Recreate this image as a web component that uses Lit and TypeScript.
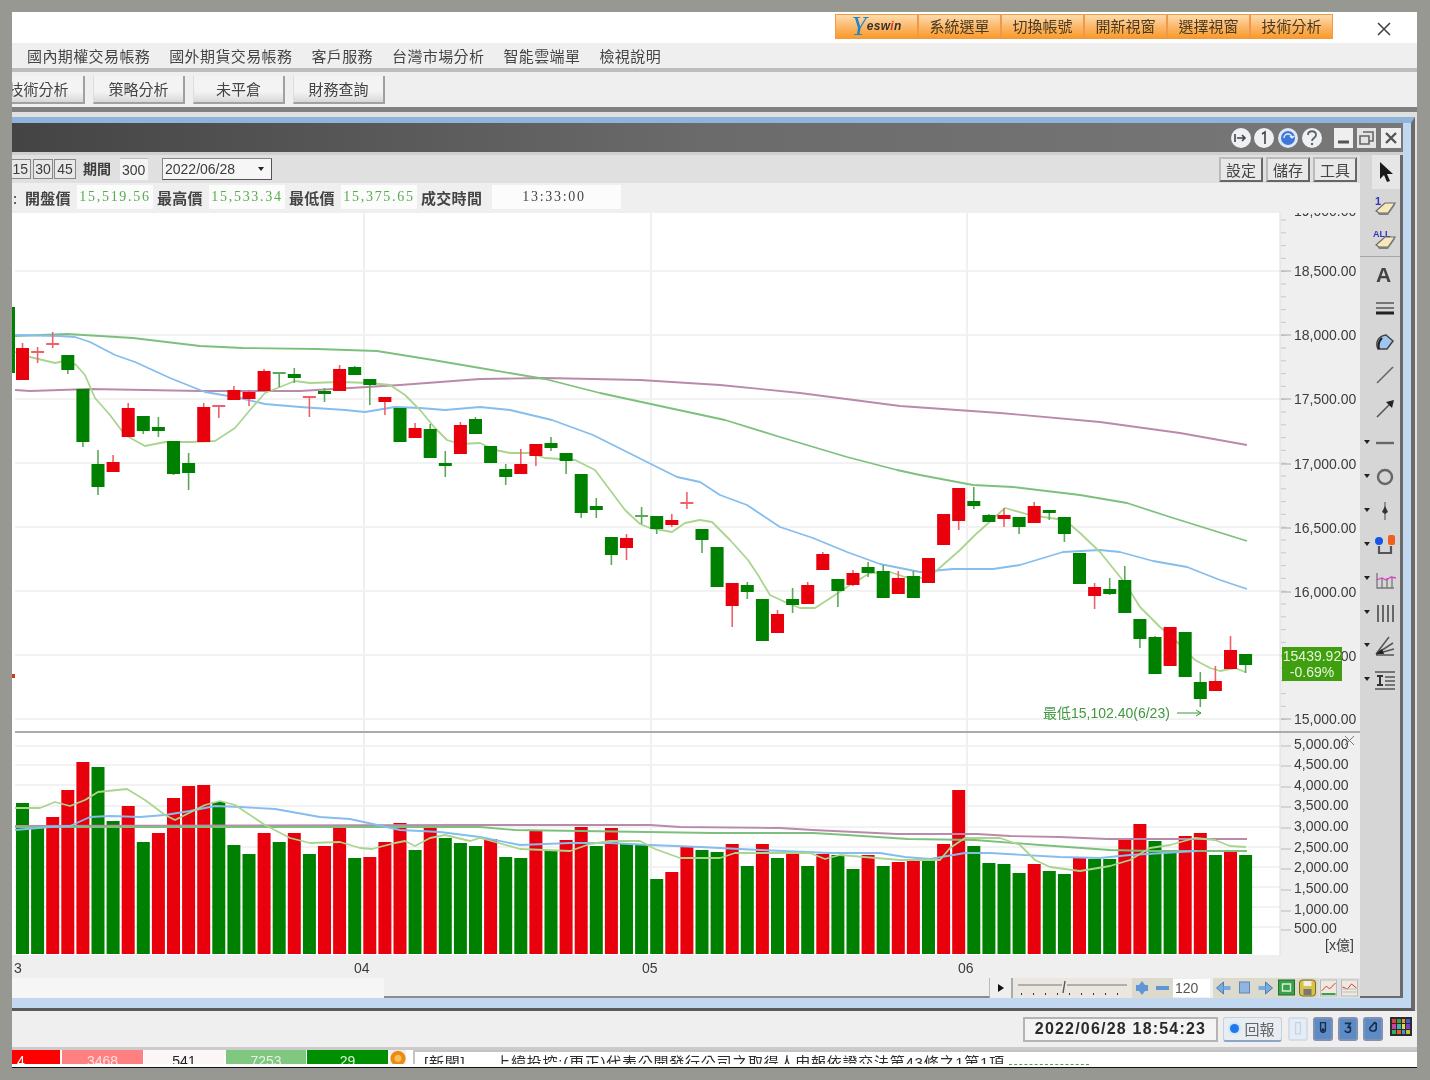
import { LitElement, html, svg, css } from 'lit';
import { customElement } from 'lit/decorators.js';

type Candle = [number, number, number, number, 'r' | 'g'];

// top, bottom, wick high, wick low, colour - in page pixels
const CANDLES: Candle[] = [
  [348,380,343,380,'r'],[351,353,347,363,'r'],[343,345,332,348,'r'],[355,370,355,374,'g'],[389,442,389,447,'g'],
  [464,487,450,495,'g'],[462,472,455,472,'r'],[408,437,403,437,'r'],[416,431,416,434,'g'],[427,431,417,437,'g'],
  [441,474,441,475,'g'],[463,473,453,490,'g'],[407,442,403,442,'r'],[405,407,405,418,'r'],[390,400,386,400,'r'],
  [392,399,390,406,'r'],[371,391,369,391,'r'],[372,374,372,387,'g'],[374,378,368,383,'g'],[396,398,396,417,'r'],
  [391,394,388,402,'g'],[369,391,365,391,'r'],[367,375,366,375,'g'],[379,385,379,405,'g'],[397,402,397,415,'r'],
  [408,442,408,442,'g'],[428,438,423,438,'r'],[429,458,424,458,'g'],[463,466,451,477,'g'],[425,454,422,454,'r'],
  [419,434,417,434,'g'],[446,463,446,463,'g'],[469,477,464,485,'g'],[464,474,449,474,'r'],[444,456,444,466,'r'],
  [443,448,437,451,'g'],[453,461,453,474,'g'],[474,513,474,518,'g'],[506,510,498,518,'g'],[537,555,537,565,'g'],
  [538,548,534,560,'r'],[515,517,507,524,'g'],[516,529,516,534,'g'],[520,525,514,527,'r'],[502,504,492,509,'r'],
  [529,540,529,553,'g'],[547,587,547,587,'g'],[583,606,583,627,'r'],[585,592,582,599,'g'],[599,641,599,641,'g'],
  [614,633,610,633,'r'],[599,605,588,613,'g'],[585,604,582,604,'r'],[554,570,552,570,'r'],[579,591,579,607,'g'],
  [573,585,570,586,'r'],[567,573,562,577,'g'],[571,598,565,598,'g'],[578,594,571,594,'r'],[576,598,571,598,'g'],
  [558,583,558,583,'r'],[514,545,514,545,'r'],[488,521,488,530,'r'],[501,506,487,509,'g'],[515,522,514,522,'g'],
  [515,519,508,527,'r'],[517,527,517,534,'g'],[506,523,502,523,'r'],[510,513,510,520,'g'],[517,534,517,542,'g'],
  [553,584,553,584,'g'],[587,596,583,609,'r'],[589,594,578,595,'g'],[580,613,566,613,'g'],[619,639,619,648,'g'],
  [637,674,636,674,'g'],[627,666,627,666,'r'],[632,677,632,677,'g'],[682,699,672,707,'g'],[681,691,666,691,'r'],
  [650,669,636,669,'r'],[654,665,654,673,'g'],
];

// bar top and colour, bars all stand on y=954
const VOLS: [number, 'r' | 'g'][] = [
  [803,'g'],[828,'g'],[817,'r'],[790,'r'],[762,'r'],[767,'g'],[821,'g'],[806,'r'],[842,'g'],[833,'r'],
  [798,'r'],[786,'r'],[785,'r'],[802,'g'],[845,'g'],[854,'g'],[833,'r'],[842,'g'],[833,'r'],[854,'g'],
  [846,'r'],[827,'r'],[858,'g'],[857,'r'],[842,'r'],[823,'r'],[850,'g'],[827,'r'],[838,'g'],[843,'g'],
  [846,'g'],[839,'r'],[857,'g'],[858,'g'],[830,'r'],[850,'g'],[840,'r'],[827,'r'],[846,'g'],[828,'r'],
  [844,'g'],[844,'g'],[879,'g'],[872,'r'],[847,'r'],[850,'g'],[852,'g'],[844,'r'],[866,'g'],[844,'r'],
  [858,'g'],[852,'r'],[866,'g'],[854,'r'],[855,'g'],[869,'g'],[855,'r'],[866,'g'],[862,'r'],[859,'r'],
  [861,'g'],[844,'r'],[790,'r'],[846,'g'],[863,'g'],[864,'g'],[873,'g'],[864,'r'],[871,'g'],[874,'g'],
  [857,'r'],[859,'g'],[859,'g'],[839,'r'],[824,'r'],[841,'g'],[853,'g'],[836,'r'],[833,'r'],[855,'g'],
  [852,'r'],[855,'g'],
];

const MA_LINES: [string, string][] = [
  ['#b98aa9', '15,390 30,391 90,389 200,391 300,391 400,385 480,379 545,378 640,380 720,385 800,393 900,406 1000,413 1100,422 1180,433 1247,445'],
  ['#7dc07d', '15,336 67,334 133,338 200,346 243,348 317,349 377,351 433,360 480,368 545,379 600,393 660,406 725,420 780,437 847,457 897,470 920,475 973,485 1013,487 1080,495 1127,503 1170,517 1247,541'],
  ['#84bdee', '15,335 60,336 75,337 90,342 115,355 135,362 170,378 205,392 240,398 265,404 300,407 345,410 365,412 395,407 420,408 445,410 480,407 510,410 552,420 593,435 633,455 677,477 700,482 720,495 747,505 780,527 813,538 847,552 880,564 920,572 953,569 993,569 1020,565 1063,552 1100,550 1120,552 1153,561 1187,567 1220,580 1247,589'],
  ['#aad58f', '15,352 30,357 55,363 68,360 76,365 85,375 95,398 110,415 125,435 145,446 165,442 190,442 215,441 235,428 250,410 265,393 280,387 295,381 310,383 340,382 370,383 390,385 405,395 420,410 435,428 447,440 460,444 480,443 495,450 510,453 530,453 545,458 560,459 575,460 595,470 610,490 625,510 640,524 650,528 672,532 685,523 700,520 712,522 730,540 748,560 758,575 770,595 785,602 800,608 815,608 832,597 850,585 870,573 890,572 905,577 925,578 935,572 960,550 975,535 1005,508 1030,515 1050,518 1065,520 1080,533 1100,552 1125,583 1140,607 1160,627 1175,640 1195,660 1210,668 1220,671 1235,668 1245,672'],
];

const VOL_LINES: [string, string][] = [
  ['#b98aa9', '15,826 480,825 650,825 680,827 780,828 813,830 897,834 977,834 1010,836 1060,837 1107,839 1247,839'],
  ['#7dc07d', '15,827 480,827 515,830 713,833 813,833 847,835 908,839 975,840 1040,845 1110,850 1150,851 1247,851'],
  ['#84bdee', '15,830 50,827 70,826 90,817 110,816 140,817 165,815 190,811 215,806 240,807 275,809 320,817 350,819 400,830 440,832 480,837 520,845 570,843 610,843 650,845 700,847 760,850 830,853 880,853 905,857 930,859 965,853 990,853 1060,857 1100,858 1130,855 1197,851'],
  ['#aad58f', '15,808 40,808 55,802 70,806 85,800 98,792 127,789 145,800 165,815 175,820 205,805 220,801 235,805 265,825 290,838 310,843 340,842 360,848 372,849 395,843 405,841 415,846 430,838 445,835 470,841 480,838 495,842 520,849 545,850 570,851 590,844 610,841 640,841 655,849 680,858 720,858 735,853 810,853 825,859 840,855 900,860 940,860 950,848 965,838 1000,838 1020,845 1035,860 1050,867 1080,871 1110,866 1130,860 1150,848 1170,845 1195,838 1215,840 1230,846 1246,847'],
];

const PRICE_LABELS: [string, number][] = [
  ['18,500.00',271],['18,000.00',335],['17,500.00',399],['17,000.00',464],['16,500.00',528],['16,000.00',592],['15,500.00',656],['15,000.00',719],
];
const VOL_LABELS: [string, number][] = [
  ['5,000.00',744],['4,500.00',764],['4,000.00',785],['3,500.00',805],['3,000.00',826],['2,500.00',847],['2,000.00',867],['1,500.00',888],['1,000.00',909],['500.00',928],
];

const px = (i: number) => 22.5 + 15.1 * i;
const red = '#e8000c';
const grn = '#008000';
const redWick = '#f0606a';
const grnWick = '#5aa85a';

@customElement('kline-chart')
export class KlineChart extends LitElement {
  static styles = css`
    :host { display: block; }
    svg { display: block; }
    text { font-family: "Liberation Sans", Arial, sans-serif; font-size: 14px; fill: #3c3c3c; }
    .low { fill: #3f983f; }
    .cjk { font-family: "Liberation Sans", "Noto Sans CJK TC", sans-serif; }
    .badge { fill: #e6f5dd; }
  `;

  render() {
    const priceTicks: number[] = [];
    for (let y = 220; y < 730; y += 12.8) priceTicks.push(y);
    return html`
      <svg width="1348" height="765" viewBox="12 213 1348 765">
        <rect x="12" y="213" width="1348" height="765" fill="#fff"/>
        <rect x="1280" y="213" width="80" height="742" fill="#efefef"/>
        <rect x="12" y="955" width="1348" height="23" fill="#efefef"/>
        <rect x="12" y="307" width="3" height="66" fill="#008000"/>
        <rect x="12" y="674" width="3" height="4" fill="#d23a1a"/>

        ${[271,335,399,463,527,591,655,719].map(y => svg`<line x1="15" x2="1280" y1=${y} y2=${y} stroke="#f2f2f2" stroke-width="2"/>`)}
        ${[746,765,785,806,827,847,867,887,907,927].map(y => svg`<line x1="15" x2="1280" y1=${y} y2=${y} stroke="#f2f2f2" stroke-width="2"/>`)}
        ${[364,651,967].map(x => svg`<line x1=${x} x2=${x} y1="213" y2="954" stroke="#f0f0f0" stroke-width="2"/>`)}
        <line x1="1280" x2="1280" y1="213" y2="955" stroke="#dddddd"/>

        ${priceTicks.map(y => svg`<line x1="1281" x2="1286" y1=${y} y2=${y} stroke="#c8c8c8"/>`)}
        ${PRICE_LABELS.map(([, y]) => svg`<line x1="1281" x2="1291" y1=${y} y2=${y} stroke="#aaaaaa"/>`)}
        ${VOL_LABELS.map(([, y]) => svg`<line x1="1281" x2="1291" y1=${y + 2} y2=${y + 2} stroke="#bbbbbb"/>`)}
        <text x="1294" y="216">19,000.00</text>
        ${PRICE_LABELS.map(([t, y]) => svg`<text x="1294" y=${y + 5}>${t}</text>`)}
        ${VOL_LABELS.map(([t, y]) => svg`<text x="1294" y=${y + 5}>${t}</text>`)}
        <text x="1325" y="950" class="cjk">[x億]</text>
        <path d="M1345 736l9 9M1354 736l-9 9" stroke="#777" fill="none"/>

        ${MA_LINES.map(([c, p]) => svg`<polyline points=${p} fill="none" stroke=${c} stroke-width="1.8" stroke-linejoin="round"/>`)}

        ${CANDLES.map(([t, b, h, l, c], i) => svg`
          <line x1=${px(i)} x2=${px(i)} y1=${h} y2=${l} stroke=${c === 'r' ? redWick : grnWick} stroke-width="1.6"/>
          <rect x=${px(i) - 6.5} y=${t} width="13" height=${b - t}
            fill=${b - t <= 2 ? (c === 'r' ? redWick : grnWick) : (c === 'r' ? red : grn)}/>
        `)}

        <line x1="15" x2="1360" y1="732" y2="732" stroke="#ababab" stroke-width="2"/>

        ${VOLS.map(([t, c], i) => svg`<rect x=${px(i) - 6.5} y=${t} width="13" height=${954 - t} fill=${c === 'r' ? red : grn}/>`)}
        ${VOL_LINES.map(([c, p]) => svg`<polyline points=${p} fill="none" stroke=${c} stroke-width="1.8" stroke-linejoin="round"/>`)}

        <text x="1043" y="718" class="low cjk">最低15,102.40(6/23)</text>
        <path d="M1177 713h24m-5-3l5 3-5 3" stroke="#3f983f" fill="none"/>

        <rect x="1282" y="647" width="60" height="34" fill="#3f9f0f"/>
        <text x="1312" y="661" text-anchor="middle" class="badge">15439.92</text>
        <text x="1312" y="677" text-anchor="middle" class="badge">-0.69%</text>

        <text x="14" y="973">3</text>
        <text x="354" y="973">04</text>
        <text x="642" y="973">05</text>
        <text x="958" y="973">06</text>
      </svg>
    `;
  }
}

const eraser = svg`<path d="M3 17l9-8h10l-7 10H6z" fill="#f7e8ba" stroke="#6a6a6a" stroke-width="1.2"/><path d="M4 18l2 3h9l7-10v-2l-7 10H6z" fill="#7f7f7f"/>`;

const TOOLS = [
  svg`<path d="M7 2v17l4-4 3 7 3-1-3-7h6z" fill="#1a1a1a"/>`,
  svg`<text x="2" y="11" font-size="11" font-weight="700" fill="#3333bb" font-family="Liberation Sans">1</text>${eraser}`,
  svg`<text x="0" y="9" font-size="9" font-weight="700" fill="#3333bb" font-family="Liberation Sans">ALL</text>${eraser}`,
  svg`<text x="3" y="20" font-size="21" font-weight="700" fill="#444" font-family="Liberation Sans">A</text>`,
  svg`<path d="M3 7h18M3 12h18" stroke="#555" stroke-width="1.5"/><path d="M3 17h18" stroke="#222" stroke-width="3"/>`,
  svg`<path d="M5 20c-3-6 0-13 8-14l7 6-6 8z" fill="#9fc6ee" stroke="#444" stroke-width="1.5"/><path d="M6 20c-1-4 0-8 3-11" stroke="#222" stroke-width="2" fill="none"/>`,
  svg`<path d="M4 20L20 4" stroke="#666" stroke-width="1.6"/>`,
  svg`<path d="M4 20L17 7" stroke="#555" stroke-width="1.6"/><path d="M21 3l-8 2 6 6z" fill="#222"/>`,
  svg`<path d="M3 12h18" stroke="#666" stroke-width="2.4"/>`,
  svg`<circle cx="12" cy="12" r="7" fill="none" stroke="#666" stroke-width="2.4"/>`,
  svg`<path d="M12 3v18" stroke="#777" stroke-width="1.5"/><path d="M12 7l3 6-3 2-3-2z" fill="#333"/>`,
  svg`<circle cx="6" cy="8" r="4" fill="#1656e6"/><rect x="15" y="2" width="7" height="10" rx="2" fill="#f0601a"/><path d="M6 13v7h12v-7" stroke="#555" stroke-width="2.2" fill="none"/>`,
  svg`<path d="M4 6v15h17M9 11v10M14 11v10M19 11v10" stroke="#777" stroke-width="1.3" fill="none"/><path d="M3 13l6-2 4 2 5-3 5 1" stroke="#e040d0" stroke-width="1.3" fill="none"/>`,
  svg`<path d="M5 4v17M10 4v17M15 4v17M20 4v17" stroke="#666" stroke-width="2"/>`,
  svg`<path d="M3 20L16 3M3 20L20 9M3 20L21 15M3 21h18" stroke="#555" stroke-width="1.5"/><path d="M3 20l6-5 2 5z" fill="#222"/>`,
  svg`<path d="M2 4h20M2 21h20M12 9h10M12 13h10M12 17h10" stroke="#555" stroke-width="1.5"/><path d="M4 8h6M7 8v9M4 17h6" stroke="#333" stroke-width="2"/>`,
];

const CTRL = [
  svg`<path d="M3 10l7-6v12z" fill="#79abe0" stroke="#4f7cb0"/><rect x="10" y="8" width="7" height="4" fill="#79abe0"/>`,
  svg`<rect x="5" y="4" width="10" height="11" fill="#8fb6e2" stroke="#5f86b4"/>`,
  svg`<path d="M17 10l-7-6v12z" fill="#79abe0" stroke="#4f7cb0"/><rect x="3" y="8" width="7" height="4" fill="#79abe0"/>`,
  svg`<rect x="2" y="2" width="16" height="15" fill="#3aa04a" stroke="#1d7030"/><path d="M6 6h8v7H6z" fill="none" stroke="#d6f0d6" stroke-width="1.4"/>`,
  svg`<rect x="2" y="2" width="16" height="16" rx="3" fill="#d9c24a" stroke="#7d6d20"/><rect x="6" y="3" width="8" height="5" fill="#eee"/><rect x="6" y="11" width="8" height="6" fill="#777"/>`,
  svg`<rect x="2" y="2" width="16" height="16" fill="#ece9df" stroke="#bbb"/><path d="M3 13l5-5 3 3 6-6" stroke="#d83a3a" fill="none"/><path d="M3 16h14" stroke="#3aa04a" stroke-width="2"/>`,
  svg`<rect x="2" y="2" width="16" height="16" fill="#ece9df" stroke="#bbb"/><path d="M3 9l5 2 4-5 5 4" stroke="#d83a3a" fill="none"/><path d="M3 14h14M3 11h14" stroke="#bbb"/>`,
];

const STATUS_ICONS = [
  svg`<path d="M7 4h6v9a3 3 0 0 1-6 0z" fill="none" stroke="#1f2c45" stroke-width="1.8"/><circle cx="10" cy="13" r="2" fill="#1f2c45"/>`,
  svg`<path d="M6 5h7l-3 5h3v4c0 3-6 3-7 0" fill="none" stroke="#1f2c45" stroke-width="2"/>`,
  svg`<path d="M12 4L6 11c-1 4 7 5 8 1V5z" fill="none" stroke="#1f2c45" stroke-width="2"/>`,
];

@customElement('tool-rail')
export class ToolRail extends LitElement {
  static styles = css`
    :host { display: block; width: 43px; height: 843px; box-sizing: border-box; background: #d6d6d6; border-right: 3px solid #6a6a6a; border-bottom: 2px solid #6a6a6a; }
    .item { position: relative; height: 33.9px; display: flex; align-items: center; justify-content: flex-end; padding-right: 3px; box-sizing: border-box; }
    .sel { background: linear-gradient(90deg, transparent 12px, #e6e6e6 12px); }
    .sep { box-shadow: inset 0 -1px #a8a8a8; }
    .more::before { content: ""; position: absolute; left: 4px; top: 14px; border: 3px solid transparent; border-top: 4px solid #222; border-bottom: 0; }
    svg { width: 24px; height: 24px; }
  `;

  render() {
    return TOOLS.map((t, i) => html`
      <div class="item ${i === 0 ? 'sel' : ''} ${i === 2 ? 'sep' : ''} ${i >= 8 ? 'more' : ''}">
        <svg viewBox="0 0 24 24">${t}</svg>
      </div>
    `);
  }
}

@customElement('app-root')
export class AppRoot extends LitElement {
  static styles = css`
    :host { display: block; width: 1430px; height: 1080px; box-sizing: border-box; padding: 12px 13px 0 12px; background: #979891; overflow: hidden; font-family: "Noto Sans CJK TC", "Liberation Sans", sans-serif; }
    .win { width: 1405px; height: 1056px; display: flex; flex-direction: column; background: #fff; border-bottom: 1px solid #111; box-sizing: border-box; overflow: hidden; filter: blur(0.75px); }

    .top { height: 31px; flex: none; display: flex; align-items: flex-start; justify-content: flex-end; padding-top: 2px; box-sizing: border-box; }
    .obtn { width: 83px; height: 25px; box-sizing: border-box; padding-bottom: 2px; display: flex; align-items: center; justify-content: center; background: linear-gradient(#fedcae, #fbb566 55%, #fa9a28); border: 1px solid #ee9a4a; color: #4a3a1e; font-size: 15px; line-height: 1; }
    .logo { font-family: "Liberation Sans", sans-serif; font-style: italic; font-weight: 700; font-size: 12px; letter-spacing: 0.3px; color: #333; }
    .logo b { font-family: "Liberation Serif", serif; font-size: 27px; font-weight: 400; color: #1b86cc; line-height: 20px; }
    .logo i { color: #d8342c; }
    .close { width: 18px; height: 18px; margin: 6px 24px 0 42px; }

    .menu { height: 29px; flex: none; box-sizing: border-box; background: #efefef; border-bottom: 4px solid #bdbdbd; display: flex; align-items: center; gap: 19px; padding-left: 15px; font-size: 15px; letter-spacing: 0.4px; color: #444; line-height: 1; }

    .toolbar { height: 35px; flex: none; background: #efefef; display: flex; align-items: center; gap: 8px; box-sizing: border-box; overflow: hidden; }
    .tbtn { width: 92px; height: 28px; flex: none; box-sizing: border-box; display: flex; align-items: center; justify-content: center; background: linear-gradient(#f3f3f3 60%, #d8d8d8); border-right: 2px solid #a0a0a0; border-bottom: 2px solid #a0a0a0; border-left: 1px solid #ddd; font-size: 15px; color: #444; line-height: 1; }
    .tbtn.first { margin-left: -19px; }

    .frame { height: 904px; flex: none; box-sizing: border-box; border-top: 5px solid #808080; padding: 5px 2px 0 0; background: #e0e0e0; display: flex; }
    .blue { width: 100%; box-sizing: border-box; background: #c2d8f0; border-top: 6px solid #8fb4dc; border-bottom: 3px solid #5a5a5a; border-right: 4px solid #6a6a6a; padding-right: 8px; }
    .title { height: 32px; box-sizing: border-box; border-bottom: 3px solid #cfcfcf; background: linear-gradient(90deg, #444, #6b6b6b 50%, #787878); display: flex; align-items: center; justify-content: flex-end; padding-right: 2px; }
    .title svg { display: block; }
    .title .circles { margin-right: 3px; }
    .body { display: flex; }
    .content { width: 1348px; flex: none; }

    .sub { height: 28px; background: #e0e0e0; display: flex; align-items: center; font-size: 14px; color: #3c3c3c; font-family: "Liberation Sans", "Noto Sans CJK TC", sans-serif; line-height: 1; }
    .per { height: 20px; width: 20px; flex: none; box-sizing: border-box; border: 1px solid #888; background: #e8e8e8; display: flex; align-items: center; justify-content: center; margin-right: 1px; }
    .per.cut { margin-left: -1px; justify-content: flex-end; padding-right: 2px; }
    .per.next { margin-left: 1px; }
    .per.wide { width: 22px; }
    .lbl { margin: 0 9px 0 6px; font-weight: 700; color: #3c3c3c; }
    .in { width: 28px; height: 22px; box-sizing: border-box; background: #f4f4f4; display: flex; align-items: center; padding-left: 2px; border-top: 1px solid #bbb; margin-right: 14px; }
    .date { width: 110px; height: 22px; box-sizing: border-box; background: #f6f6f6; border: 1px solid #888; border-right-color: #555; border-bottom-color: #555; display: flex; align-items: center; justify-content: space-between; padding: 0 5px 0 2px; }
    .date::after { content: ""; border: 3px solid transparent; border-top: 4px solid #222; border-bottom: 0; margin-right: 2px; }
    .spacer { flex: 1; }
    .sbtn { width: 44px; height: 25px; box-sizing: border-box; border: 2px solid #666; border-top-color: #bbb; border-left-color: #bbb; background: #e9e9e9; margin-left: 3px; display: flex; align-items: center; justify-content: center; color: #444; font-size: 15px; font-family: "Noto Sans CJK TC", sans-serif; }
    .sbtn:last-child { margin-right: 3px; }

    .info { height: 30px; background: #efefef; display: flex; align-items: center; box-sizing: border-box; font-size: 15px; color: #444; line-height: 1; padding-bottom: 2px; }
    .mark { width: 9px; flex: none; padding-left: 1px; box-sizing: border-box; }
    .cap { width: 48px; flex: none; white-space: nowrap; font-weight: 700; margin: 0 4px; font-size: 15px; letter-spacing: 0.3px; }
    .cap.long { width: 67px; }
    .val { width: 76px; height: 24px; flex: none; box-sizing: border-box; background: #fcfcfc; display: flex; align-items: center; justify-content: center; color: #58ac4e; font: 14px "Liberation Serif", serif; letter-spacing: 1.7px; }
    .val.t { width: 129px; color: #444; padding-right: 5px; }

    .scroll { height: 20px; display: flex; align-items: stretch; }
    .s1 { width: 372px; flex: none; background: #f6f6f6; }
    .s2 { width: 606px; flex: none; box-sizing: border-box; background: #efefef; border-bottom: 2px solid #8c8c8c; border-right: 1px solid #bbb; }
    .s3 { flex: 1; display: flex; align-items: center; background: #efefef; }
    .play { width: 23px; height: 20px; box-sizing: border-box; background: #efefef; border-right: 2px solid #aaa; display: flex; align-items: center; justify-content: center; }
    .play::after { content: ""; border: 4px solid transparent; border-left: 6px solid #111; border-right: 0; }
    .c { height: 20px; flex: none; display: block; background: #dcd9cd; }
    .c.slider { background: #e9e7df; }
    .input { width: 37px; height: 18px; box-sizing: border-box; background: #fff; color: #555; font: 14px "Liberation Sans", sans-serif; display: flex; align-items: center; padding-left: 2px; margin-right: 3px; }
    .c.grey { background: #e0e0e0; }

    .status { height: 36px; flex: none; background: #efefef; display: flex; align-items: center; justify-content: flex-end; padding-right: 5px; box-sizing: border-box; }
    .clock { width: 195px; height: 25px; box-sizing: border-box; border: 2px solid #b4b4b4; background: #f4f4f4; display: flex; align-items: center; justify-content: center; font: 700 16px "Liberation Sans", sans-serif; letter-spacing: 1.2px; color: #2a2a2a; margin-right: 5px; }
    .report { width: 59px; height: 25px; box-sizing: border-box; border: 1px solid #c4d0de; border-bottom: 2px solid #8ca6c8; border-radius: 3px; background: #e8edf3; display: flex; align-items: center; justify-content: center; gap: 5px; color: #666; font-size: 15px; margin-right: 6px; }
    .report::before { content: ""; width: 9px; height: 9px; border-radius: 50%; background: #1e78ee; box-shadow: 0 0 0 2px #d0e4fa; }
    .sic { width: 20px; height: 24px; box-sizing: border-box; border: 2px solid #8592ad; border-radius: 3px; background: #5b8cc8; margin-right: 5px; }
    .sic svg { display: block; width: 16px; height: 20px; }
    .sic.faint { background: #e4edf6; border-color: #d5dcea; }
    .pal { width: 22px; height: 19px; margin-left: 2px; display: grid; grid-template-columns: repeat(4, 1fr); gap: 1px; padding: 2px; box-sizing: border-box; background: #2b2b2b; margin-bottom: 5px; }
    .pal span { display: block; }

    .rule { height: 3px; flex: none; background: #cbcbcb; }
    .ticker { height: 14px; flex: none; display: flex; overflow: hidden; font: 14px/22px "Liberation Sans", "Noto Sans CJK TC", sans-serif; text-align: center; background: #fff; }
    .tk { flex: none; box-sizing: border-box; }
    .tk.a { width: 48px; background: #ff0000; color: #fff; text-align: left; padding-left: 5px; margin-right: 2px; }
    .tk.b { width: 81px; background: #ff8080; color: #ffe0e0; margin-right: 1px; }
    .tk.c2 { width: 80px; background: #fdf6f6; color: #222; margin-right: 2px; }
    .tk.d { width: 80px; background: #80c880; color: #e0f4e0; margin-right: 1px; }
    .tk.e { width: 81px; background: #008f00; color: #e0f4e0; margin-right: 2px; }
    .tk.f { width: 16px; background: radial-gradient(circle at 50% 60%, #f5c060 0 3px, #ef8a10 4px 7px, #eee 8px); }
    .news { flex: none; border: 2px solid #c4c4c4; border-bottom: 0; border-right: 0; margin-left: 7px; padding-left: 9px; font-size: 15px; color: #2c2c2c; white-space: nowrap; letter-spacing: 0.75px; width: 1004px; text-align: left; box-sizing: border-box; }
    .news em { font-style: normal; margin-left: 30px; }
    .foot { height: 2px; flex: none; background: #fff; padding-left: 997px; }
    .foot div { width: 80px; border-top: 1px dashed #3fa83f; }
  `;

  render() {
    const pal = ['#e04040','#40a040','#e0a030','#4060d0','#d040a0','#40b0b0','#e0e040','#8040c0','#30b060','#e06030','#4090e0','#c0c040'];
    return html`
      <div class="win">
        <div class="top">
          <div class="obtn logo"><b>Y</b>esw<i>i</i>n</div>
          ${['系統選單','切換帳號','開新視窗','選擇視窗','技術分析'].map(t => html`<div class="obtn">${t}</div>`)}
          <svg class="close" viewBox="0 0 18 18"><path d="M3 3l12 12M15 3L3 15" stroke="#444" stroke-width="1.6"/></svg>
        </div>
        <div class="menu">
          ${['國內期權交易帳務','國外期貨交易帳務','客戶服務','台灣市場分析','智能雲端單','檢視說明'].map(t => html`<span>${t}</span>`)}
        </div>
        <div class="toolbar">
          <div class="tbtn first">技術分析</div>
          <div class="tbtn">策略分析</div>
          <div class="tbtn">未平倉</div>
          <div class="tbtn">財務查詢</div>
        </div>
        <div class="frame">
          <div class="blue">
            <div class="title">
              <svg class="circles" width="102" height="24" viewBox="0 0 102 24">
                <circle cx="12" cy="12" r="10" fill="#eef0f4"/><path d="M6 8v8M8 12h8m-3-3l3 3-3 3" stroke="#444" stroke-width="1.6" fill="none"/>
                <circle cx="35" cy="12" r="10" fill="#eef0f4"/><path d="M33 8l3-2v12" stroke="#444" stroke-width="1.6" fill="none"/>
                <circle cx="59" cy="12" r="10" fill="#dfe8f8"/><circle cx="59" cy="12" r="7" fill="#3f78d8"/><path d="M55 12a4 4 0 0 1 8 0m0 0l-2-2m2 2l2-2" stroke="#e8f0ff" fill="none" stroke-width="1.4"/>
                <circle cx="83" cy="12" r="10" fill="#eef0f4"/><path d="M79 9c0-5 8-5 8 0 0 3-4 3-4 6" stroke="#566" stroke-width="1.8" fill="none"/><circle cx="83" cy="18" r="1.2" fill="#566"/>
              </svg>
              <svg width="67" height="22" viewBox="0 0 67 22">
                <rect x="0" y="1" width="19" height="20" fill="#efefef"/><path d="M4 15h11" stroke="#555" stroke-width="3"/>
                <rect x="23" y="1" width="19" height="20" fill="#e4e4e4"/><path d="M29 5h10v9h-4M26 9h9v8h-9z" stroke="#666" stroke-width="1.6" fill="none"/>
                <rect x="47" y="1" width="20" height="20" fill="#efefef"/><path d="M52 6l10 10M62 6L52 16" stroke="#555" stroke-width="2.4"/>
              </svg>
            </div>
            <div class="body">
              <div class="content">
                <div class="sub">
                  <div class="per cut">15</div><div class="per next">30</div><div class="per wide">45</div>
                  <span class="lbl">期間</span>
                  <div class="in">300</div>
                  <div class="date">2022/06/28</div>
                  <span class="spacer"></span>
                  <div class="sbtn">設定</div><div class="sbtn">儲存</div><div class="sbtn">工具</div>
                </div>
                <div class="info">
                  <span class="mark">:</span>
                  <span class="cap">開盤價</span><div class="val">15,519.56</div>
                  <span class="cap">最高價</span><div class="val">15,533.34</div>
                  <span class="cap">最低價</span><div class="val">15,375.65</div>
                  <span class="cap long">成交時間</span><div class="val t">13:33:00</div>
                </div>
                <kline-chart></kline-chart>
                <div class="scroll">
                  <div class="s1"></div>
                  <div class="s2"></div>
                  <div class="s3">
                    <div class="play"></div>
                    <svg class="c slider" width="119" height="20" viewBox="0 0 119 20">
                      <path d="M5 7h44M54 7h60" stroke="#777" stroke-width="1.2"/><path d="M52 3l-2 12" stroke="#555" stroke-width="1.4"/>
                      <path d="M8 16h1M20 16h1M32 16h1M44 16h1M56 16h1M68 16h1M80 16h1M92 16h1M104 16h1" stroke="#333" stroke-width="2"/>
                    </svg>
                    <svg class="c" width="20" height="20" viewBox="0 0 20 20"><path d="M10 3l3 4h3v6h-3l-3 4-3-4H4V7h3z" fill="#5f97d6"/></svg>
                    <svg class="c" width="21" height="20" viewBox="0 0 21 20"><rect x="4" y="8" width="13" height="4" fill="#5f97d6"/></svg>
                    <div class="input">120</div>
                    ${CTRL.map((c, i) => html`<svg class="c ${i > 4 ? 'grey' : ''}" width="21" height="20" viewBox="0 0 20 20">${c}</svg>`)}
                  </div>
                </div>
              </div>
              <tool-rail></tool-rail>
            </div>
          </div>
        </div>
        <div class="status">
          <div class="clock">2022/06/28 18:54:23</div>
          <div class="report">回報</div>
          <div class="sic faint"><svg viewBox="0 0 20 24"><path d="M7 4h6v14H7z" fill="none" stroke="#c8d2e0" stroke-width="1.6"/></svg></div>
          ${STATUS_ICONS.map(s => html`<div class="sic"><svg viewBox="0 0 20 24">${s}</svg></div>`)}
          <div class="pal">${pal.map(c => html`<span style="background:${c}"></span>`)}</div>
        </div>
        <div class="rule"></div>
        <div class="ticker">
          <div class="tk a">4</div>
          <div class="tk b">3468</div>
          <div class="tk c2">541</div>
          <div class="tk d">7253</div>
          <div class="tk e">29</div>
          <div class="tk f"></div>
          <div class="news">[新聞]<em>上緯投控:(更正)代表公開發行公司之取得人申報依證交法第43條之1第1項</em></div>
        </div>
        <div class="foot"><div></div></div>
      </div>
    `;
  }
}
